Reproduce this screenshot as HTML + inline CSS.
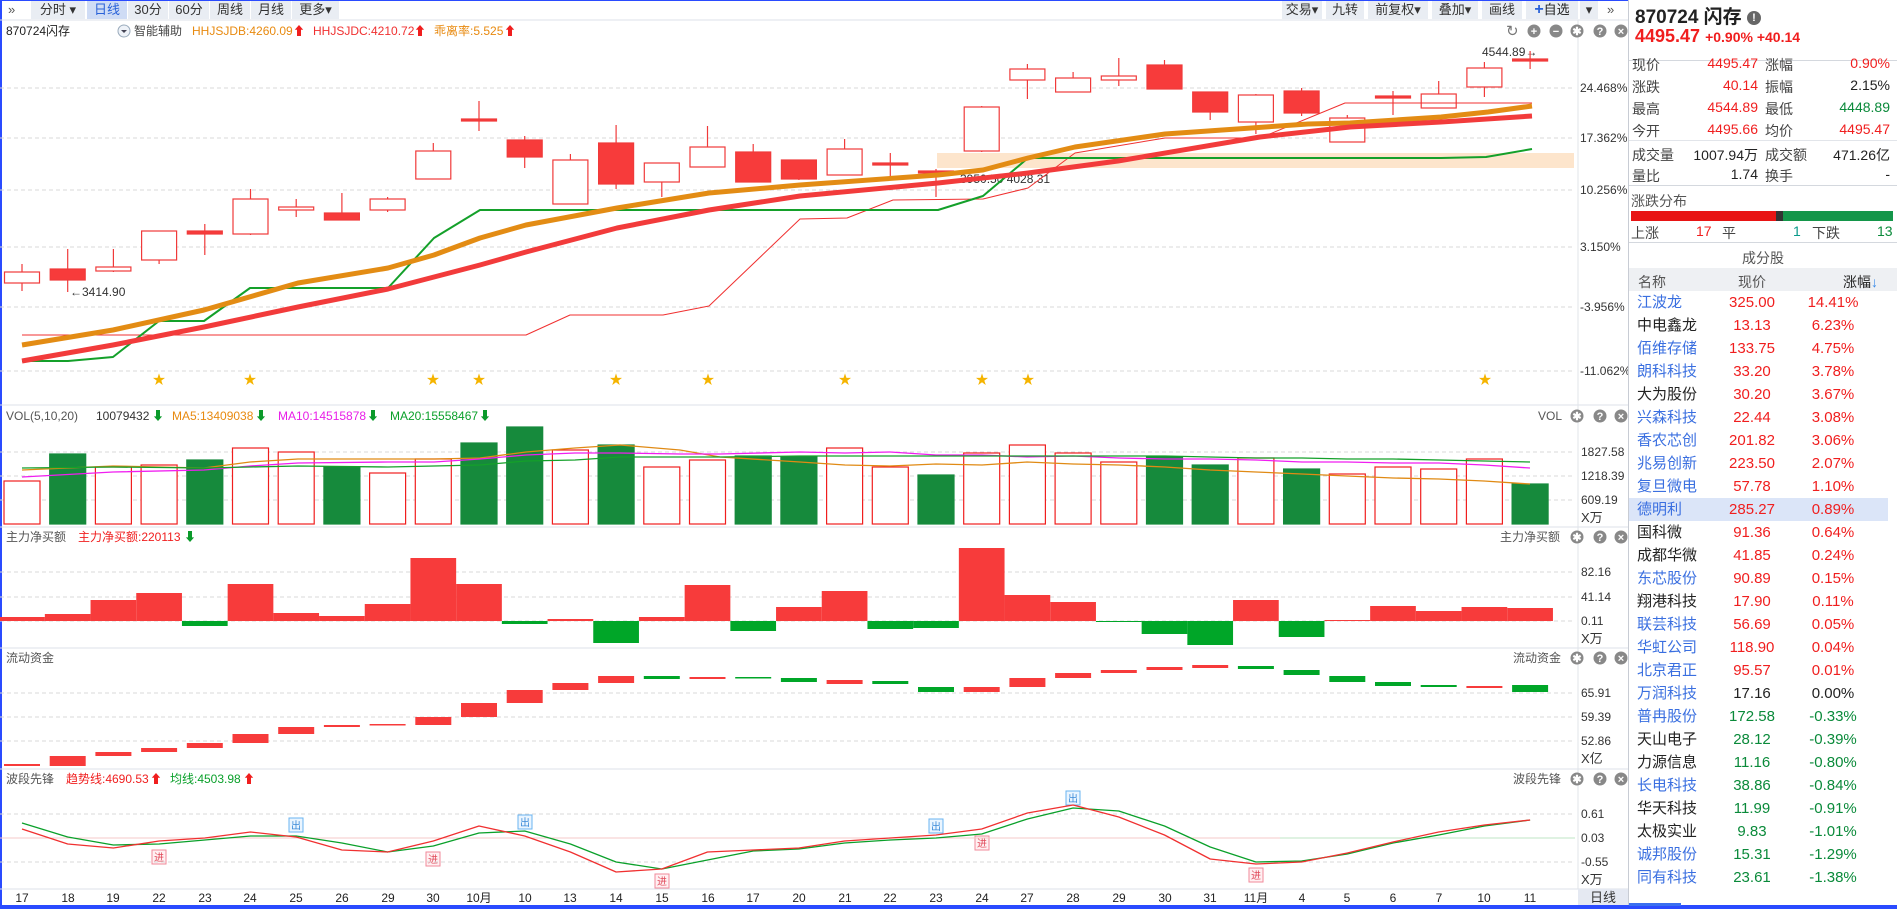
<!DOCTYPE html>
<html><head><meta charset="utf-8">
<style>
*{margin:0;padding:0;box-sizing:border-box}
html,body{width:1897px;height:909px;overflow:hidden;background:#fff;font-family:"Liberation Sans","Noto Sans CJK SC",sans-serif;color:#222}
#wrap{position:absolute;left:0;top:0;width:1897px;height:909px;border-top:1px solid #2a4bff;border-left:2px solid #2a4bff;border-bottom:4px solid #2a4bff}
.tb{position:absolute;top:1px;height:18px;font-size:13px;line-height:18px;color:#333}
.btn{position:absolute;top:1px;height:18px;background:#e9edf3;text-align:center;font-size:13px;line-height:18px;color:#333}
svg text{font-family:"Liberation Sans","Noto Sans CJK SC",sans-serif}
#rp{position:absolute;left:1628px;top:0;width:269px;height:905px;border-left:1px solid #c8ccd4;background:#fff}
.r{position:absolute;font-size:14px;white-space:nowrap}
.lst{position:absolute;left:1628px;width:262px;height:23px;font-size:15px;line-height:23px}
.lst span{position:absolute}
.n{left:9px}.p{left:94px;width:60px;text-align:center}.z{left:170px;width:70px;text-align:center}
.red{color:#f01e1e}.grn{color:#0a8a3a}.blu{color:#3a6fe0}
</style></head><body>
<div id="wrap"></div>
<div class="tb" style="left:8px;color:#555">»</div>
<div class="btn" style="left:31px;width:54px">分时 ▾</div>
<div class="btn" style="left:87px;width:40px;background:#cfdcf5;color:#2a62d8">日线</div>
<div class="btn" style="left:128px;width:40px">30分</div>
<div class="btn" style="left:169px;width:40px">60分</div>
<div class="btn" style="left:210px;width:40px">周线</div>
<div class="btn" style="left:251px;width:40px">月线</div>
<div class="btn" style="left:292px;width:47px">更多▾</div>
<div class="btn" style="left:1282px;width:40px">交易▾</div>
<div class="btn" style="left:1326px;width:38px">九转</div>
<div class="btn" style="left:1368px;width:60px">前复权▾</div>
<div class="btn" style="left:1432px;width:46px">叠加▾</div>
<div class="btn" style="left:1482px;width:40px">画线</div>
<div class="btn" style="left:1526px;width:52px;color:#222"><b style="color:#2a62d8;font-size:16px">+</b>自选</div>
<div class="btn" style="left:1580px;width:18px">▾</div>
<div class="tb" style="left:1607px;color:#555">»</div>

<svg id="ch" width="1628" height="909" style="position:absolute;left:0;top:0">
<g font-size="12">
<line x1="0" y1="20" x2="1628" y2="20" stroke="#dde2ea"/>
<text x="6" y="35" fill="#222">870724闪存</text>
<circle cx="124" cy="31" r="6" fill="#eef2f8" stroke="#9ab"/><path d="M121 30h6l-3 3z" fill="#445"/>
<text x="134" y="35" fill="#444">智能辅助</text>
<text x="192" y="35" fill="#e88a10">HHJSJDB:4260.09</text><text x="293" y="35" fill="#f01e1e">⬆</text>
<text x="313" y="35" fill="#f03030">HHJSJDC:4210.72</text><text x="414" y="35" fill="#f01e1e">⬆</text>
<text x="434" y="35" fill="#e88a10">乖离率:5.525</text><text x="504" y="35" fill="#f01e1e">⬆</text>
<g fill="#333"><text x="1482" y="56">4544.89→</text><text x="70" y="296">←3414.90</text><text x="960" y="183" fill="#333">3950.50  4028.31</text></g>
<g fill="#333">
<text x="1580" y="92">24.468%</text><text x="1580" y="142">17.362%</text><text x="1580" y="194">10.256%</text><text x="1580" y="251">3.150%</text><text x="1580" y="311">-3.956%</text><text x="1580" y="375">-11.062%</text>
</g>
<line x1="1578" y1="20" x2="1578" y2="889" stroke="#e2e5ea"/>
<line x1="0" y1="405" x2="1628" y2="405" stroke="#dde2ea"/>
<text x="6" y="420" fill="#555">VOL(5,10,20)</text><text x="96" y="420" fill="#333">10079432</text><text x="152" y="420" fill="#0a9a2a">⬇</text>
<text x="172" y="420" fill="#e88a10">MA5:13409038</text><text x="255" y="420" fill="#0a9a2a">⬇</text>
<text x="278" y="420" fill="#e81ee8">MA10:14515878</text><text x="367" y="420" fill="#0a9a2a">⬇</text>
<text x="390" y="420" fill="#0aa02a">MA20:15558467</text><text x="479" y="420" fill="#0a9a2a">⬇</text>
<text x="1538" y="420" fill="#555">VOL</text>
<g fill="#333"><text x="1581" y="456">1827.58</text><text x="1581" y="480">1218.39</text><text x="1581" y="504">609.19</text><text x="1581" y="522" font-size="13">X万</text></g>
<line x1="0" y1="527" x2="1628" y2="527" stroke="#dde2ea"/>
<text x="6" y="541" fill="#555">主力净买额</text><text x="78" y="541" fill="#f01e1e">主力净买额:220113</text><text x="184" y="541" fill="#0a9a2a">⬇</text>
<text x="1500" y="541" fill="#555">主力净买额</text>
<g fill="#333"><text x="1581" y="576">82.16</text><text x="1581" y="601">41.14</text><text x="1581" y="625">0.11</text><text x="1581" y="643" font-size="13">X万</text></g>
<line x1="0" y1="648" x2="1628" y2="648" stroke="#dde2ea"/>
<text x="6" y="662" fill="#555">流动资金</text><text x="1513" y="662" fill="#555">流动资金</text>
<g fill="#333"><text x="1581" y="697">65.91</text><text x="1581" y="721">59.39</text><text x="1581" y="745">52.86</text><text x="1581" y="763" font-size="13">X亿</text></g>
<line x1="0" y1="769" x2="1628" y2="769" stroke="#dde2ea"/>
<text x="6" y="783" fill="#555">波段先锋</text><text x="66" y="783" fill="#f01e1e">趋势线:4690.53</text><text x="150" y="783" fill="#f01e1e">⬆</text>
<text x="170" y="783" fill="#0aa02a">均线:4503.98</text><text x="243" y="783" fill="#f01e1e">⬆</text>
<text x="1513" y="783" fill="#555">波段先锋</text>
<g fill="#333"><text x="1581" y="818">0.61</text><text x="1581" y="842">0.03</text><text x="1581" y="866">-0.55</text><text x="1581" y="884" font-size="13">X万</text></g>
<line x1="0" y1="889" x2="1628" y2="889" stroke="#dde2ea"/>
<rect x="1578" y="889" width="50" height="16" fill="#e5e9f2"/><text x="1590" y="902" fill="#333" font-size="13">日线</text>
<g id="dates" fill="#222" font-size="12" text-anchor="middle">
<text x="22" y="902">17</text><text x="68" y="902">18</text><text x="113" y="902">19</text><text x="159" y="902">22</text><text x="205" y="902">23</text><text x="250" y="902">24</text><text x="296" y="902">25</text><text x="342" y="902">26</text><text x="388" y="902">29</text><text x="433" y="902">30</text><text x="479" y="902">10月</text><text x="525" y="902">10</text><text x="570" y="902">13</text><text x="616" y="902">14</text><text x="662" y="902">15</text><text x="708" y="902">16</text><text x="753" y="902">17</text><text x="799" y="902">20</text><text x="845" y="902">21</text><text x="890" y="902">22</text><text x="936" y="902">23</text><text x="982" y="902">24</text><text x="1027" y="902">27</text><text x="1073" y="902">28</text><text x="1119" y="902">29</text><text x="1165" y="902">30</text><text x="1210" y="902">31</text><text x="1256" y="902">11月</text><text x="1302" y="902">4</text><text x="1347" y="902">5</text><text x="1393" y="902">6</text><text x="1439" y="902">7</text><text x="1484" y="902">10</text><text x="1530" y="902">11</text>
</g>
<g id="marks" font-size="10" text-anchor="middle">
<rect x="289" y="818" width="14" height="14" fill="#eaf5ff" stroke="#6ab4f0"/><text x="296" y="829" fill="#3a8ad8">出</text>
<rect x="518" y="815" width="14" height="14" fill="#eaf5ff" stroke="#6ab4f0"/><text x="525" y="826" fill="#3a8ad8">出</text>
<rect x="929" y="819" width="14" height="14" fill="#eaf5ff" stroke="#6ab4f0"/><text x="936" y="830" fill="#3a8ad8">出</text>
<rect x="1066" y="791" width="14" height="14" fill="#eaf5ff" stroke="#6ab4f0"/><text x="1073" y="802" fill="#3a8ad8">出</text>
<rect x="152" y="850" width="14" height="14" fill="#fff0f2" stroke="#f08a9a"/><text x="159" y="861" fill="#e04a5a">进</text>
<rect x="426" y="852" width="14" height="14" fill="#fff0f2" stroke="#f08a9a"/><text x="433" y="863" fill="#e04a5a">进</text>
<rect x="655" y="874" width="14" height="14" fill="#fff0f2" stroke="#f08a9a"/><text x="662" y="885" fill="#e04a5a">进</text>
<rect x="975" y="836" width="14" height="14" fill="#fff0f2" stroke="#f08a9a"/><text x="982" y="847" fill="#e04a5a">进</text>
<rect x="1249" y="868" width="14" height="14" fill="#fff0f2" stroke="#f08a9a"/><text x="1256" y="879" fill="#e04a5a">进</text>
</g>
</g>
<g id="g"></g>
</svg>

<div id="rp">
<div class="r" style="left:6px;top:2px;font-size:19px;font-weight:bold;color:#222">870724 闪存 <span style="display:inline-block;width:14px;height:14px;border-radius:7px;background:#666;color:#fff;font-size:11px;text-align:center;line-height:14px;vertical-align:2px">!</span></div>
<div class="r red" style="left:6px;top:26px;font-size:18px;font-weight:bold">4495.47 <span style="font-size:14px">+0.90% +40.14</span></div>
<div style="position:absolute;left:0;top:60px;width:269px;border-top:1px solid #d4d8de"></div>
<div style="position:absolute;left:0;top:140px;width:269px;border-top:1px solid #e2e5ea"></div>
<div style="position:absolute;left:0;top:185px;width:269px;border-top:1px solid #d4d8de"></div>
<div style="position:absolute;left:0;top:242px;width:269px;border-top:1px solid #d4d8de"></div>
</div>
<div id="stats"></div>
<div class="r" style="left:1631px;top:191px;font-size:14px;color:#555">涨跌分布</div>
<div style="position:absolute;left:1631px;top:211px;width:145px;height:10px;background:#e81414"></div>
<div style="position:absolute;left:1776px;top:211px;width:7px;height:10px;background:#333"></div>
<div style="position:absolute;left:1783px;top:211px;width:110px;height:10px;background:#14964a"></div>
<div class="r" style="left:1631px;top:223px;color:#444">上涨</div>
<div class="r red" style="left:1696px;top:223px">17</div>
<div class="r" style="left:1722px;top:223px;color:#444">平</div>
<div class="r" style="left:1793px;top:223px;color:#0a9a8a">1</div>
<div class="r" style="left:1812px;top:223px;color:#444">下跌</div>
<div class="r grn" style="left:1877px;top:223px">13</div>
<div class="r" style="left:1742px;top:248px;color:#555">成分股</div>
<div style="position:absolute;left:1629px;top:268px;width:268px;height:23px;background:#eef0f3"></div>
<div class="r" style="left:1638px;top:272px;color:#555">名称</div>
<div class="r" style="left:1738px;top:272px;color:#555">现价</div>
<div class="r" style="left:1843px;top:272px;color:#222">涨幅<span style="color:#3a8ae8">↓</span></div>
<div style="position:absolute;left:1629px;top:498px;width:259px;height:23px;background:#dbe5f8"></div>
<div style="position:absolute;left:1629px;top:903px;width:52px;height:3px;background:#3a6ff0"></div>

<script>
var NS="http://www.w3.org/2000/svg",G=document.getElementById('g');
function el(t,a){var e=document.createElementNS(NS,t);for(var k in a)e.setAttribute(k,a[k]);G.appendChild(e);return e}
function X(k){return 22+45.7*k}
function pl(pts,c,w,op){el('polyline',{points:pts.map(function(p){return p.join(',')}).join(' '),fill:'none',stroke:c,'stroke-width':w,'stroke-linejoin':'round','stroke-opacity':op||1})}
[88,138,190,247,307,371,452,476,500,572,597,621,693,717,741,814,862].forEach(function(y){el('line',{x1:0,y1:y,x2:1575,y2:y,stroke:'#d8d8d8','stroke-dasharray':'4,3'})});
el('line',{x1:0,y1:838,x2:1280,y2:838,stroke:'#f6c8c8'});el('line',{x1:1280,y1:838,x2:1575,y2:838,stroke:'#bfe6c6'});
el('rect',{x:937,y:153,width:637,height:15,fill:'#fde5cc'});
var C=[[272,283,264,291,0],[269,280,249,292,1],[267,271,249,272,0],[231,260,231,264,0],[231,234,224,255,1],[199,234,189,235,0],[207,210,199,217,0],[213,220,193,220,1],[199,210,197,212,0],[151,179,143,179,0],[119,121,101,131,1],[140,157,136,168,1],[160,204,154,204,0],[143,184,125,189,1],[163,182,163,197,0],[147,167,126,167,0],[152,182,144,182,1],[160,179,160,180,1],[149,175,139,175,0],[163,165,153,180,1],[171,173,169,197,1],[107,151,106,152,0],[69,80,64,99,0],[78,92,72,92,0],[76,80,58,86,0],[65,89,60,89,1],[92,112,92,120,1],[95,122,94,134,0],[91,113,88,116,1],[118,142,115,142,0],[96,98,91,115,1],[94,108,81,108,0],[68,87,62,97,0],[59,61,51,69,1]];
C.forEach(function(c,i){var x=X(i);el('line',{x1:x,y1:c[2],x2:x,y2:c[3],stroke:'#f03a3a','stroke-width':1.2});
el('rect',{x:x-17.5,y:c[0],width:35,height:Math.max(c[1]-c[0],2),fill:c[4]?'#f73b3b':'#fff',stroke:'#f03a3a','stroke-width':1.2})});
pl([[22,335],[526,335],[570,315],[663,315],[709,306],[800,219],[847,218],[893,200],[983,199],[1028,188],[1075,153],[1165,138],[1260,138],[1345,103],[1532,103]],'#f03030',1);
pl([[22,361],[68,361],[113,357],[159,321],[204,321],[250,288],[388,288],[434,238],[480,210],[938,210],[983,196],[1028,158],[1441,158],[1486,157],[1532,149]],'#14a02a',2);
pl([[22,345],[113,330],[204,310],[298,283],[388,268],[434,255],[480,238],[526,225],[617,208],[709,193],[800,185],[938,175],[983,170],[1028,158],[1075,147],[1165,134],[1308,124],[1350,123],[1441,117],[1488,112],[1532,106]],'#e38c14',5);
pl([[22,361],[113,345],[204,327],[298,307],[388,289],[434,277],[480,265],[526,252],[617,228],[709,210],[800,196],[938,183],[1028,173],[1118,161],[1260,137],[1350,127],[1441,122],[1532,116]],'#f23b3b',5);
[159,250,433,479,616,708,845,982,1028,1485].forEach(function(x){var t=el('text',{x:x,y:384,'text-anchor':'middle','font-size':13,fill:'#f5b400'});t.textContent='★'});
var V=[[481,0],[454,1],[467,0],[465,0],[460,1],[448,0],[452,0],[467,1],[473,0],[459,0],[443,1],[427,1],[450,0],[445,1],[467,0],[460,0],[456,1],[457,1],[448,0],[467,0],[475,1],[453,0],[445,0],[453,0],[462,0],[457,1],[465,1],[458,0],[469,1],[474,0],[467,0],[469,0],[459,0],[484,1]];
V.forEach(function(v,i){var x=X(i);el('rect',{x:x-18,y:v[0],width:36,height:524-v[0],fill:v[1]?'#168a3c':'#fff',stroke:v[1]?'#168a3c':'#f01e1e','stroke-width':1.2})});
pl([[22,470],[113,466],[204,468],[250,462],[298,459],[388,459],[434,459],[480,458],[526,452],[575,448],[620,445],[680,450],[720,457],[800,462],[845,465],[890,466],[936,464],[982,465],[1027,462],[1073,464],[1119,465],[1165,467],[1210,470],[1256,472],[1302,474],[1347,476],[1393,478],[1439,479],[1484,481],[1530,484]],'#e08a14',1.3);
pl([[22,477],[113,472],[204,470],[250,466],[298,463],[388,462],[434,462],[480,459],[526,455],[575,453],[620,453],[680,454],[720,454],[800,452],[845,453],[890,452],[936,455],[982,455],[1027,457],[1073,456],[1119,458],[1165,459],[1210,459],[1256,460],[1302,462],[1347,462],[1393,463],[1439,463],[1484,465],[1530,468]],'#f01ef0',1.3);
pl([[22,468],[113,467],[204,468],[250,467],[298,466],[388,467],[434,466],[480,465],[526,461],[575,460],[620,457],[680,457],[720,457],[800,456],[845,456],[890,456],[936,456],[982,456],[1027,456],[1073,456],[1119,456],[1165,456],[1210,457],[1256,458],[1302,458],[1347,459],[1393,459],[1439,460],[1484,461],[1530,462]],'#14a02a',1.3);
var N=[617,614,600,593,626,584,613,616,604,558,584,624,619,643,617,585,631,607,591,629,628,548,595,602,622,634,645,600,637,620,606,611,607,608];
N.forEach(function(v,i){var x=X(i)-22.85;if(v<621)el('rect',{x:x,y:v,width:45.7,height:621-v,fill:'#f73b3b'});else el('rect',{x:x,y:621,width:45.7,height:v-621,fill:'#00a628'})});
var L=[[764,766,0],[756,766,0],[752,756,0],[748,752,0],[743,748,0],[734,743,0],[727,734,0],[725,727,0],[724,725,0],[717,725,0],[703,717,0],[690,703,0],[683,690,0],[676,683,0],[676,679,1],[677,679,0],[677,678,1],[678,682,1],[680,684,0],[681,684,1],[687,692,1],[687,692,0],[678,687,0],[673,678,0],[670,673,0],[667,670,0],[665,668,0],[666,669,1],[670,675,1],[676,682,1],[682,686,1],[685,687,1],[686,688,0],[685,692,1]];
L.forEach(function(v,i){el('rect',{x:X(i)-18,y:v[0],width:36,height:Math.max(v[1]-v[0],1.5),fill:v[2]?'#00a628':'#f73b3b'})});
var R=[829,844,848,841,838,832,837,850,852,841,826,836,852,872,869,852,850,848,841,838,835,829,813,805,817,835,859,864,862,853,842,832,825,820];
var Gr=[823,837,845,844,840,836,836,843,852,846,833,831,844,862,869,860,851,849,843,840,838,834,819,808,811,826,847,862,861,854,843,835,826,820];
pl(Gr.map(function(y,i){return[X(i),y]}),'#0aa02a',1.3);
pl(R.map(function(y,i){return[X(i),y]}),'#f03030',1.3);
function icon(x,y,ch){el('circle',{cx:x,cy:y,r:6.5,fill:'#888'});var t=el('text',{x:x,y:y+4,'text-anchor':'middle','font-size':11,'font-weight':'bold',fill:'#fff'});t.textContent=ch}
var t=el('text',{x:1506,y:36,'font-size':15,fill:'#777'});t.textContent='↻';
[['+',1534],['−',1556],['✱',1577],['?',1600],['×',1621]].forEach(function(a){icon(a[1],31,a[0])});
[416,537,658,779].forEach(function(y){[['✱',1577],['?',1600],['×',1621]].forEach(function(a){icon(a[1],y,a[0])})});
var S=[[64,'现价','4495.47','red','涨幅','0.90%','red'],[86,'涨跌','40.14','red','振幅','2.15%',''],[108,'最高','4544.89','red','最低','4448.89','grn'],[130,'今开','4495.66','red','均价','4495.47','red'],[154,'成交量','1007.94万','','成交额','471.26亿',''],[175,'量比','1.74','','换手','-','']];
var h='';S.forEach(function(s){var y=s[0]-9;h+='<div class="r" style="left:1632px;top:'+y+'px;color:#444">'+s[1]+'</div><div class="r '+s[3]+'" style="left:1680px;width:78px;text-align:right;top:'+y+'px">'+s[2]+'</div><div class="r" style="left:1765px;top:'+y+'px;color:#444">'+s[4]+'</div><div class="r '+s[6]+'" style="left:1810px;width:80px;text-align:right;top:'+y+'px">'+s[5]+'</div>'});
document.getElementById('stats').innerHTML=h;
</script>
<div class="lst" style="top:291px"><span class="n blu">江波龙</span><span class="p red">325.00</span><span class="z red">14.41%</span></div>
<div class="lst" style="top:314px"><span class="n">中电鑫龙</span><span class="p red">13.13</span><span class="z red">6.23%</span></div>
<div class="lst" style="top:337px"><span class="n blu">佰维存储</span><span class="p red">133.75</span><span class="z red">4.75%</span></div>
<div class="lst" style="top:360px"><span class="n blu">朗科科技</span><span class="p red">33.20</span><span class="z red">3.78%</span></div>
<div class="lst" style="top:383px"><span class="n">大为股份</span><span class="p red">30.20</span><span class="z red">3.67%</span></div>
<div class="lst" style="top:406px"><span class="n blu">兴森科技</span><span class="p red">22.44</span><span class="z red">3.08%</span></div>
<div class="lst" style="top:429px"><span class="n blu">香农芯创</span><span class="p red">201.82</span><span class="z red">3.06%</span></div>
<div class="lst" style="top:452px"><span class="n blu">兆易创新</span><span class="p red">223.50</span><span class="z red">2.07%</span></div>
<div class="lst" style="top:475px"><span class="n blu">复旦微电</span><span class="p red">57.78</span><span class="z red">1.10%</span></div>
<div class="lst" style="top:498px"><span class="n blu">德明利</span><span class="p red">285.27</span><span class="z red">0.89%</span></div>
<div class="lst" style="top:521px"><span class="n">国科微</span><span class="p red">91.36</span><span class="z red">0.64%</span></div>
<div class="lst" style="top:544px"><span class="n">成都华微</span><span class="p red">41.85</span><span class="z red">0.24%</span></div>
<div class="lst" style="top:567px"><span class="n blu">东芯股份</span><span class="p red">90.89</span><span class="z red">0.15%</span></div>
<div class="lst" style="top:590px"><span class="n">翔港科技</span><span class="p red">17.90</span><span class="z red">0.11%</span></div>
<div class="lst" style="top:613px"><span class="n blu">联芸科技</span><span class="p red">56.69</span><span class="z red">0.05%</span></div>
<div class="lst" style="top:636px"><span class="n blu">华虹公司</span><span class="p red">118.90</span><span class="z red">0.04%</span></div>
<div class="lst" style="top:659px"><span class="n blu">北京君正</span><span class="p red">95.57</span><span class="z red">0.01%</span></div>
<div class="lst" style="top:682px"><span class="n blu">万润科技</span><span class="p">17.16</span><span class="z">0.00%</span></div>
<div class="lst" style="top:705px"><span class="n blu">普冉股份</span><span class="p grn">172.58</span><span class="z grn">-0.33%</span></div>
<div class="lst" style="top:728px"><span class="n">天山电子</span><span class="p grn">28.12</span><span class="z grn">-0.39%</span></div>
<div class="lst" style="top:751px"><span class="n">力源信息</span><span class="p grn">11.16</span><span class="z grn">-0.80%</span></div>
<div class="lst" style="top:774px"><span class="n blu">长电科技</span><span class="p grn">38.86</span><span class="z grn">-0.84%</span></div>
<div class="lst" style="top:797px"><span class="n">华天科技</span><span class="p grn">11.99</span><span class="z grn">-0.91%</span></div>
<div class="lst" style="top:820px"><span class="n">太极实业</span><span class="p grn">9.83</span><span class="z grn">-1.01%</span></div>
<div class="lst" style="top:843px"><span class="n blu">诚邦股份</span><span class="p grn">15.31</span><span class="z grn">-1.29%</span></div>
<div class="lst" style="top:866px"><span class="n blu">同有科技</span><span class="p grn">23.61</span><span class="z grn">-1.38%</span></div>
</body></html>
